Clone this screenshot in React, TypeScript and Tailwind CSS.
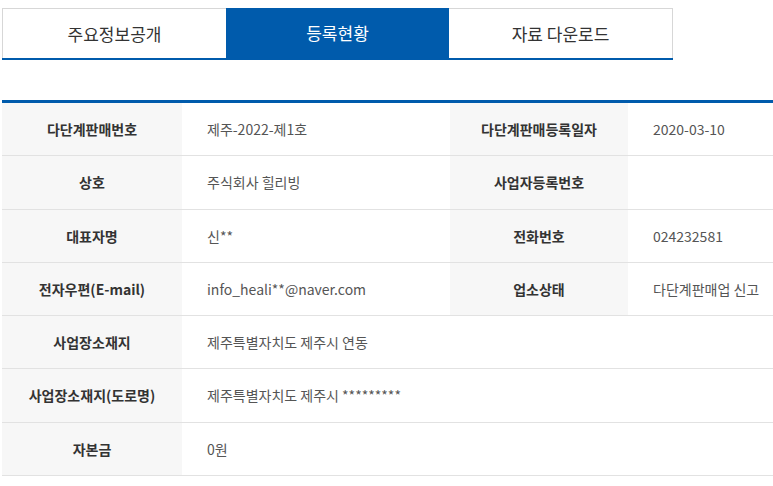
import React from "react";

const tabs = ["주요정보공개", "등록현황", "자료 다운로드"];

type Row = { label: string; value: string; label2?: string; value2?: string; h: string };

const rows: Row[] = [
  { label: "다단계판매번호", value: "제주-2022-제1호", label2: "다단계판매등록일자", value2: "2020-03-10", h: "h-[53px]" },
  { label: "상호", value: "주식회사 힐리빙", label2: "사업자등록번호", value2: "", h: "h-[54px]" },
  { label: "대표자명", value: "신**", label2: "전화번호", value2: "024232581", h: "h-[53px]" },
  { label: "전자우편(E-mail)", value: "info_heali**@naver.com", label2: "업소상태", value2: "다단계판매업 신고", h: "h-[53px]" },
  { label: "사업장소재지", value: "제주특별자치도 제주시 연동", h: "h-[53px]" },
  { label: "사업장소재지(도로명)", value: "제주특별자치도 제주시 *********", h: "h-[54px]" },
  { label: "자본금", value: "0원", h: "h-[53px]" },
];

export default function App() {
  return (
    <div
      className="w-[773px] h-[486px] overflow-hidden bg-white pl-[2px] pt-2"
      style={{ fontFamily: '"Noto Sans CJK KR", "Noto Sans", sans-serif' }}
    >
      <div className="flex w-[671px] border-b-2 border-[#005bac]">
        {tabs.map((t, i) => {
          const active = i === 1;
          return (
            <div
              key={t}
              className={
                active
                  ? "w-[223px] h-[50px] flex items-center justify-center bg-[#005bac] text-white text-[17px]"
                  : "flex-1 h-[50px] flex items-center justify-center bg-white text-[#333] text-[17px] border-t border-[#d7d7d7] " +
                    (i === 0 ? "border-l" : "border-r")
              }
            >
              {t}
            </div>
          );
        })}
      </div>

      <div className="mt-10 w-[830px] border-t-[3px] border-[#005bac]">
        {rows.map((r) => (
          <div
            key={r.label}
            className={`grid grid-cols-[180px_268px_178px_1fr] ${r.h} border-b border-[#e2e2e2] text-[14px]`}
          >
            <div className="bg-[#f7f7f7] flex items-center justify-center font-bold text-[#333]">
              {r.label}
            </div>
            {r.label2 !== undefined ? (
              <>
                <div className="flex items-center pl-[25px] text-[#555]">{r.value}</div>
                <div className="bg-[#f7f7f7] flex items-center justify-center font-bold text-[#333]">
                  {r.label2}
                </div>
                <div className="flex items-center pl-[25px] text-[#555] whitespace-nowrap">{r.value2}</div>
              </>
            ) : (
              <div className="col-span-3 flex items-center pl-[25px] text-[#555]">{r.value}</div>
            )}
          </div>
        ))}
      </div>
    </div>
  );
}
